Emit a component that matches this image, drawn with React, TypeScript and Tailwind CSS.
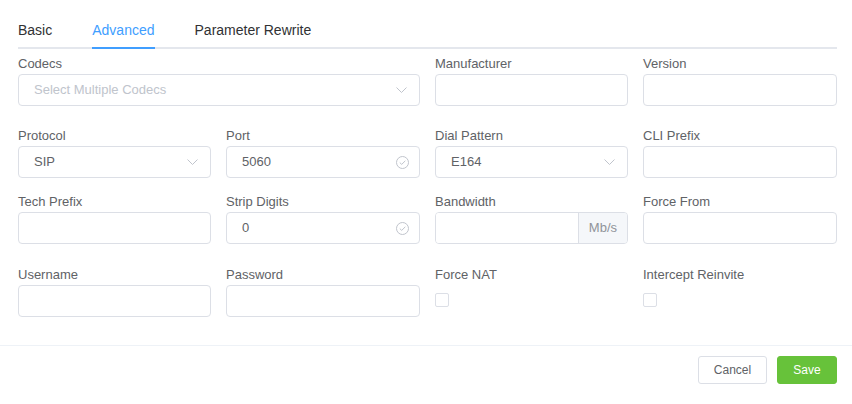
import React from "react";

const Chevron = () => (
  <svg width="11" height="6" viewBox="0 0 11 6" fill="none" className="shrink-0">
    <path d="M0.5 0.5 L5.5 5.5 L10.5 0.5" stroke="#c0c4cc" strokeWidth="1" />
  </svg>
);

const CheckCircle = () => (
  <svg width="13" height="13" viewBox="0 0 13 13" fill="none" className="shrink-0">
    <circle cx="6.5" cy="6.5" r="6" stroke="#c0c4cc" strokeWidth="1" />
    <path d="M3.8 6.6 L5.7 8.4 L9.3 4.8" stroke="#c0c4cc" strokeWidth="1" />
  </svg>
);

const Label = ({ children }: { children: React.ReactNode }) => (
  <div className="h-5 leading-5 text-[13px] text-[#606266]">{children}</div>
);

const Input = ({ value, placeholder }: { value?: string; placeholder?: string }) => (
  <div className="h-8 rounded-[4px] border border-[#dcdfe6] bg-white px-[15px] flex items-center text-[13px] text-[#606266]">
    {value ? value : <span className="text-[#c0c4cc]">{placeholder}</span>}
  </div>
);

const Select = ({ value, placeholder }: { value?: string; placeholder?: string }) => (
  <div className="h-8 rounded-[4px] border border-[#dcdfe6] bg-white pl-[15px] pr-[12px] flex items-center justify-between text-[13px] text-[#606266]">
    {value ? <span>{value}</span> : <span className="text-[#c0c4cc]">{placeholder}</span>}
    <Chevron />
  </div>
);

const ValidInput = ({ value }: { value: string }) => (
  <div className="h-8 rounded-[4px] border border-[#dcdfe6] bg-white pl-[15px] pr-[10px] flex items-center justify-between text-[13px] text-[#606266]">
    <span>{value}</span>
    <CheckCircle />
  </div>
);

const Checkbox = () => (
  <div className="mt-[8px] w-[14px] h-[14px] rounded-[2px] border border-[#dcdfe6] bg-white" />
);

const rowCls = "grid grid-cols-[193px_194px_193px_194px] gap-x-[15px]";

export default function App() {
  return (
    <div className="w-[852px] h-[404px] bg-white font-['Liberation_Sans',Arial,sans-serif] overflow-hidden">
      <div className="pl-[18px] pr-[15px] pt-[9px]">
        <div className="flex border-b-2 border-[#e4e7ed] text-[14px]">
          <div className="h-10 -mb-[2px] border-b-2 border-transparent leading-[42px] pr-5 text-[#303133]">Basic</div>
          <div className="h-10 -mb-[2px] mx-5 border-b-2 border-[#409eff] leading-[42px] text-[#409eff]">Advanced</div>
          <div className="h-10 -mb-[2px] border-b-2 border-transparent leading-[42px] pl-5 text-[#303133]">Parameter Rewrite</div>
        </div>

        <div className={"mt-[5px] " + rowCls}>
          <div className="col-span-2">
            <Label>Codecs</Label>
            <Select placeholder="Select Multiple Codecs" />
          </div>
          <div>
            <Label>Manufacturer</Label>
            <Input />
          </div>
          <div>
            <Label>Version</Label>
            <Input />
          </div>
        </div>

        <div className={"mt-[20px] " + rowCls}>
          <div>
            <Label>Protocol</Label>
            <Select value="SIP" />
          </div>
          <div>
            <Label>Port</Label>
            <ValidInput value="5060" />
          </div>
          <div>
            <Label>Dial Pattern</Label>
            <Select value="E164" />
          </div>
          <div>
            <Label>CLI Prefix</Label>
            <Input />
          </div>
        </div>

        <div className={"mt-[14px] " + rowCls}>
          <div>
            <Label>Tech Prefix</Label>
            <Input />
          </div>
          <div>
            <Label>Strip Digits</Label>
            <ValidInput value="0" />
          </div>
          <div>
            <Label>Bandwidth</Label>
            <div className="h-8 flex rounded-[4px] border border-[#dcdfe6] overflow-hidden text-[13px]">
              <div className="flex-1 bg-white" />
              <div className="px-[10px] flex items-center bg-[#f5f7fa] border-l border-[#dcdfe6] text-[#909399]">Mb/s</div>
            </div>
          </div>
          <div>
            <Label>Force From</Label>
            <Input />
          </div>
        </div>

        <div className={"mt-[21px] h-[52px] " + rowCls}>
          <div>
            <Label>Username</Label>
            <Input />
          </div>
          <div>
            <Label>Password</Label>
            <Input />
          </div>
          <div>
            <Label>Force NAT</Label>
            <Checkbox />
          </div>
          <div>
            <Label>Intercept Reinvite</Label>
            <Checkbox />
          </div>
        </div>
      </div>

      <div className="mt-[28px] border-t border-[#eef2f7] pt-[10px] pr-[15px] flex justify-end gap-[10px]">
        <button className="h-7 w-[69px] rounded-[3px] border border-[#dcdfe6] bg-white text-[12px] text-[#606266] font-medium">Cancel</button>
        <button className="h-7 w-[60px] rounded-[3px] border border-[#67c23a] bg-[#67c23a] text-[12px] text-white font-medium">Save</button>
      </div>
    </div>
  );
}
